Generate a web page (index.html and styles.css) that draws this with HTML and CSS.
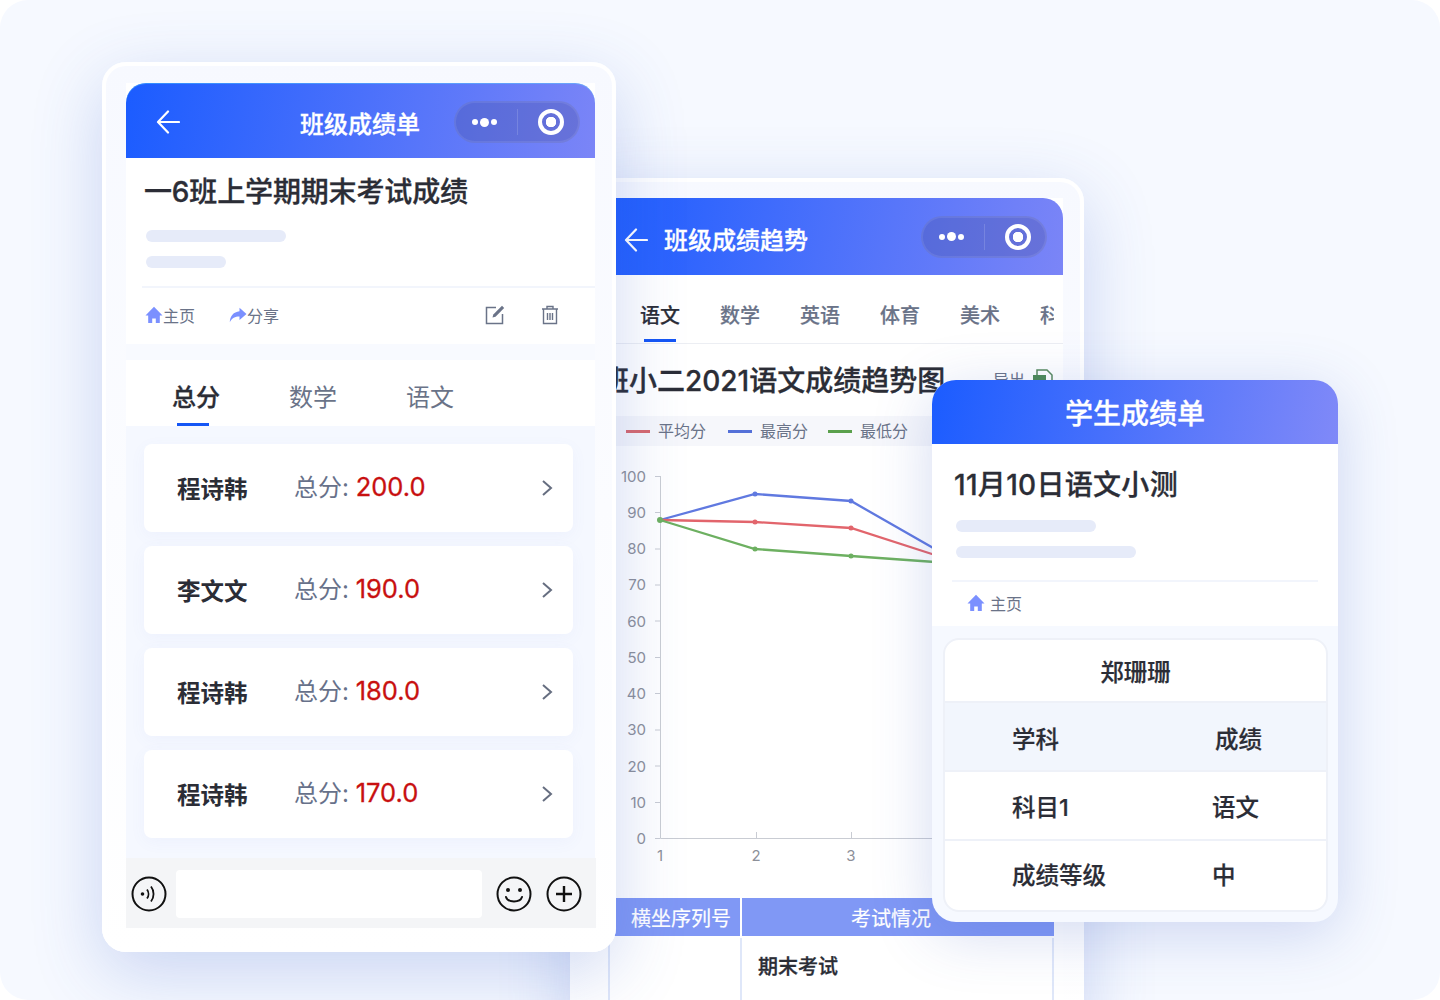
FILE: index.html
```html
<!DOCTYPE html>
<html lang="zh-CN">
<head>
  <meta charset="UTF-8">
  <title>成绩单</title>
  <link rel="stylesheet" href="styles.css">
</head>
<body>
<div class="canvas">

  <!-- 班级成绩趋势 -->
  <section class="frame frame-trend">
    <div class="screen">
      <header class="bar bar-trend">
        <svg class="back" width="24" height="24" viewBox="0 0 24 24"><path d="M12 1.500 2 12l10 10.500M3 12h20" fill="none" stroke="#fff" stroke-width="2.200" stroke-linecap="round" stroke-linejoin="round"/></svg>
        <h2 class="bar-title">班级成绩趋势</h2>
        <div class="capsule">
          <span class="dots"><i></i><b></b><i></i></span>
          <span class="capsule-line"></span>
          <span class="ring"></span>
        </div>
      </header>
      <nav class="subject-tabs">
        <a class="active">语文</a><a>数学</a><a>英语</a><a>体育</a><a>美术</a><a>科学</a>
      </nav>
      <div class="trend-head">
        <h3>班小二2021语文成绩趋势图</h3>
        <span class="export">导出
          <svg width="20" height="22" viewBox="0 0 20 22"><path d="M4 8V2h10l5 5v14H6" fill="none" stroke="#5a8a5e" stroke-width="1.500"/><rect x="0" y="7" width="13" height="9" fill="#4e8a55"/></svg>
        </span>
      </div>
      <div class="legend">
        <span class="key key-red">平均分</span>
        <span class="key key-blue">最高分</span>
        <span class="key key-green">最低分</span>
      </div>
      <svg class="chart" width="473" height="452" viewBox="590 446 473 452">
        <g class="axis">
          <path d="M660.500 476v362.500H1063"/>
          <path d="M655 476.500h5M655 512.500h5M655 549h5M655 585h5M655 621h5M655 657.500h5M655 693.500h5M655 730h5M655 766h5M655 802.500h5M655 838.500h5M756.500 832v6M851.500 832v6"/>
        </g>
        <g class="ticks">
          <text x="646" y="482">100</text><text x="646" y="518">90</text><text x="646" y="554">80</text>
          <text x="646" y="590">70</text><text x="646" y="627">60</text><text x="646" y="663">50</text>
          <text x="646" y="699">40</text><text x="646" y="735">30</text><text x="646" y="772">20</text>
          <text x="646" y="808">10</text><text x="646" y="844">0</text>
        </g>
        <g class="ticks ticks-x">
          <text x="660" y="861">1</text><text x="756" y="861">2</text><text x="851" y="861">3</text>
        </g>
        <polyline class="line" stroke="#6079e0" points="660,520 755,494 851,501 935,549"/>
        <polyline class="line" stroke="#e2656c" points="660,520 755,522 851,528 935,555"/>
        <polyline class="line" stroke="#6db061" points="660,520 755,549 851,556 935,562"/>
        <g fill="#6079e0"><circle cx="755" cy="494" r="2.500"/><circle cx="851" cy="501" r="2.500"/></g>
        <g fill="#e2656c"><circle cx="755" cy="522" r="2.500"/><circle cx="851" cy="528" r="2.500"/></g>
        <g fill="#6db061"><circle cx="660" cy="520" r="3"/><circle cx="755" cy="549" r="2.500"/><circle cx="851" cy="556" r="2.500"/></g>
      </svg>
      <div class="sheet">
        <div class="sheet-th sheet-th-a">横坐序列号</div>
        <div class="sheet-th sheet-th-b">考试情况</div>
        <div class="sheet-td"></div>
        <div class="sheet-td sheet-exam">期末考试</div>
      </div>
    </div>
  </section>

  <!-- 班级成绩单 -->
  <section class="frame frame-class">
    <div class="screen">
      <header class="bar bar-class">
        <svg class="back" width="24" height="24" viewBox="0 0 24 24"><path d="M12 1.500 2 12l10 10.500M3 12h20" fill="none" stroke="#fff" stroke-width="2.200" stroke-linecap="round" stroke-linejoin="round"/></svg>
        <h2 class="bar-title">班级成绩单</h2>
        <div class="capsule">
          <span class="dots"><i></i><b></b><i></i></span>
          <span class="capsule-line"></span>
          <span class="ring"></span>
        </div>
      </header>
      <div class="intro">
        <h1>一6班上学期期末考试成绩</h1>
        <div class="pill pill-140"></div>
        <div class="pill pill-80"></div>
      </div>
      <div class="rule"></div>
      <div class="actions">
        <a class="action">
          <svg width="18" height="18" viewBox="0 0 18 18"><path d="M9 .8.500 9.500h2.700V17h4v-4.500h3.600V17h4V9.500h2.700z" fill="#7b90ff"/></svg>主页</a>
        <a class="action">
          <svg width="18" height="16" viewBox="0 0 18 16"><path d="M10.500 .8 17.500 7l-7 6V9.500C6 9.500 3 11 .8 15.200 1 9 4.500 5 10.500 4.300z" fill="#7b90ff"/></svg>分享</a>
        <svg class="tool-edit" width="20" height="20" viewBox="0 0 20 20"><path d="M11 2.500H1.500v16h16V9" fill="none" stroke="#6a7388" stroke-width="1.500"/><path d="M17 .8 19.200 3l-8.700 8.700-3 .8.800-3z" fill="#6a7388"/></svg>
        <svg class="tool-trash" width="18" height="20" viewBox="0 0 18 20"><path d="M1 4h16M6 4V1.500h6V4M2.500 4v14.500h13V4M6.500 8v7M9 8v7M11.500 8v7" fill="none" stroke="#6a7388" stroke-width="1.400"/></svg>
      </div>
      <div class="band"></div>
      <nav class="total-tabs">
        <a class="active">总分</a><a>数学</a><a>语文</a>
      </nav>
      <div class="list">
        <div class="row"><span class="row-name">程诗韩</span><span class="row-score">总分: <em>200.0</em></span><svg class="chevron" width="12" height="18" viewBox="0 0 12 18"><path d="m2 2 8 7-8 7" fill="none" stroke="#666e80" stroke-width="2"/></svg></div>
        <div class="row"><span class="row-name">李文文</span><span class="row-score">总分: <em>190.0</em></span><svg class="chevron" width="12" height="18" viewBox="0 0 12 18"><path d="m2 2 8 7-8 7" fill="none" stroke="#666e80" stroke-width="2"/></svg></div>
        <div class="row"><span class="row-name">程诗韩</span><span class="row-score">总分: <em>180.0</em></span><svg class="chevron" width="12" height="18" viewBox="0 0 12 18"><path d="m2 2 8 7-8 7" fill="none" stroke="#666e80" stroke-width="2"/></svg></div>
        <div class="row"><span class="row-name">程诗韩</span><span class="row-score">总分: <em>170.0</em></span><svg class="chevron" width="12" height="18" viewBox="0 0 12 18"><path d="m2 2 8 7-8 7" fill="none" stroke="#666e80" stroke-width="2"/></svg></div>
      </div>
      <div class="composer">
        <svg width="36" height="36" viewBox="0 0 36 36"><circle cx="18" cy="18" r="16.500" fill="none" stroke="#111" stroke-width="2"/><circle cx="11.500" cy="18" r="1.800" fill="#111"/><path d="M16 13.500c2 2.600 2 6.400 0 9M20 10.500c3.400 4.400 3.400 10.600 0 15" fill="none" stroke="#111" stroke-width="1.800"/></svg>
        <div class="composer-input"></div>
        <svg width="36" height="36" viewBox="0 0 36 36"><circle cx="18" cy="18" r="16.500" fill="none" stroke="#111" stroke-width="2"/><circle cx="12" cy="14" r="2" fill="#111"/><circle cx="24" cy="14" r="2" fill="#111"/><path d="M10 21c2 6 14 6 16 0" fill="none" stroke="#111" stroke-width="2" stroke-linecap="round"/></svg>
        <svg width="36" height="36" viewBox="0 0 36 36"><circle cx="18" cy="18" r="16.500" fill="none" stroke="#111" stroke-width="2"/><path d="M18 10v16M10 18h16" fill="none" stroke="#111" stroke-width="2.400"/></svg>
      </div>
    </div>
  </section>

  <!-- 学生成绩单 -->
  <section class="student">
    <header class="student-bar">学生成绩单</header>
    <div class="student-intro">
      <h1>11月10日语文小测</h1>
      <div class="pill pill-140"></div>
      <div class="pill pill-180"></div>
      <div class="student-rule"></div>
      <a class="action action-home">
        <svg width="18" height="18" viewBox="0 0 18 18"><path d="M9 .8.500 9.500h2.700V17h4v-4.500h3.600V17h4V9.500h2.700z" fill="#7b90ff"/></svg>主页</a>
    </div>
    <div class="grade">
      <div class="grade-name">郑珊珊</div>
      <div class="grade-row grade-head"><span>学科</span><span class="grade-shift">成绩</span></div>
      <div class="grade-row"><span>科目1</span><span>语文</span></div>
      <div class="grade-row"><span>成绩等级</span><span>中</span></div>
    </div>
  </section>

</div>
</body>
</html>
```

FILE: styles.css
```css
* {
  box-sizing: border-box;
  margin: 0;
  padding: 0;
}
body {
  width: 1440px;
  height: 1000px;
  overflow: hidden;
  background-color: white;
  font-family: Inter, 'Noto Sans CJK SC', sans-serif;
  color: #2b2d36;
}
.canvas {
  position: relative;
  width: 1440px;
  height: 1000px;
  overflow: hidden;
  border-radius: 28px;
  background-color: #f6f9ff;
}

/* windows */
.frame {
  position: absolute;
  width: 514px;
  border-radius: 24px;
  background: linear-gradient(180deg, #f7f9ff, #ffffff);
  box-shadow: inset 0 0 0 4px rgba(255, 255, 255, 0.9), 0 20px 70px rgba(60, 95, 200, 0.24);
}
.frame-class {
  left: 102px;
  top: 62px;
  height: 890px;
  padding: 21px 21px 0 24px;
}
.frame-trend {
  left: 570px;
  top: 178px;
  height: 860px;
  padding: 20px 21px 0 20px;
}
.screen {
  background-color: white;
}
.bar {
  color: white;
  background: linear-gradient(100deg, #1b5cff, #7b85f7);
  border-radius: 20px 20px 0 0;
}
.bar-class {
  display: grid;
  grid-template-columns: 144px auto 1fr;
  align-items: center;
  height: 75px;
  padding: 0 15px 0 30px;
  box-shadow: inset 0 1px rgba(90, 230, 255, 0.35);
}
.bar-trend {
  display: flex;
  align-items: center;
  height: 77px;
  padding: 0 16px 0 34px;
}
.bar-class .back {
  margin-top: 2px;
}
.bar-trend .back {
  margin-top: 7px;
}
.bar-title {
  margin-top: 8px;
  font-size: 24px;
  font-weight: 500;
  line-height: 32px;
  -webkit-text-stroke: 0.3px;
}
.bar-trend .bar-title {
  margin-left: 16px;
}
.capsule {
  display: flex;
  align-items: center;
  justify-self: end;
  width: 126px;
  height: 42px;
  margin-left: auto;
  padding: 0 14px 0 16px;
  border: 2px solid rgba(255, 255, 255, 0.08);
  border-radius: 21px;
  background-color: rgba(70, 75, 150, 0.3);
}
.bar-class .capsule {
  margin-top: 3px;
}
.dots {
  display: flex;
  align-items: center;
  gap: 2px;
}
.dots i, .dots b {
  display: block;
  width: 6px;
  height: 6px;
  border-radius: 50%;
  background-color: white;
}
.dots b {
  width: 9px;
  height: 9px;
}
.capsule-line {
  width: 1px;
  height: 26px;
  margin-left: 20px;
  background-color: rgba(255, 255, 255, 0.15);
}
.ring {
  width: 26px;
  height: 26px;
  margin-left: auto;
  border: 4px solid white;
  border-radius: 50%;
  background: radial-gradient(circle, white 0 5px, transparent 5.500px);
}

/* left window */
.intro {
  padding: 14px 0 0 18px;
}
.intro h1, .student-intro h1 {
  font-size: 28px;
  font-weight: 500;
  line-height: 40px;
  -webkit-text-stroke: 0.3px;
}
.intro h1 {
  letter-spacing: -0.15px;
}
.pill {
  height: 12px;
  border-radius: 6px;
  background-color: #e6ebf9;
}
.pill-140 {
  width: 140px;
}
.pill-80 {
  width: 80px;
}
.pill-180 {
  width: 180px;
}
.intro .pill-140 {
  margin: 18px 0 14px 2px;
}
.intro .pill-80 {
  margin-left: 2px;
}
.rule {
  width: 453px;
  height: 2px;
  margin: 18px 0 0 16px;
  background-color: #f2f5fc;
}
.actions {
  display: flex;
  align-items: center;
  height: 56px;
  padding: 0 0 2px 19px;
}
.action {
  display: flex;
  align-items: center;
  width: 84px;
  font-size: 16px;
  color: #6a7388;
}
.tool-edit {
  margin-left: 172px;
}
.tool-trash {
  margin-left: 36px;
}
.band {
  height: 16px;
  background-color: #f8faff;
}
.total-tabs {
  display: flex;
  gap: 69px;
  height: 66px;
  padding: 22px 0 0 46px;
  font-size: 24px;
  line-height: 32px;
  color: #6a7388;
}
.total-tabs a {
  position: relative;
}
.total-tabs a.active {
  color: #2b2d36;
  font-weight: 500;
  -webkit-text-stroke: 0.3px;
}
.total-tabs a.active::after {
  content: "";
  position: absolute;
  left: 5px;
  top: 41px;
  width: 32px;
  height: 3px;
  background-color: #1556f5;
}
.list {
  display: flex;
  flex-direction: column;
  gap: 14px;
  height: 432px;
  padding: 18px 22px 0 18px;
  background-color: #f5f8ff;
}
.row {
  display: flex;
  align-items: center;
  height: 88px;
  padding-left: 33px;
  border-radius: 8px;
  background-color: white;
  box-shadow: 0 4px 16px rgba(90, 120, 220, 0.05);
}
.row-name {
  width: 117px;
  font-size: 23.500px;
  font-weight: 700;
}
.row-score {
  margin-bottom: 5px;
  font-size: 24px;
  color: #67718a;
}
.row-score em {
  font-style: normal;
  font-size: 25.500px;
  color: #c81010;
  -webkit-text-stroke: 0.3px;
}
.chevron {
  margin-left: auto;
  margin-right: 20px;
}
.composer {
  display: flex;
  align-items: center;
  width: 470px;
  height: 70px;
  padding: 2px 14px 0 5px;
  background-color: #f4f5f7;
}
.composer svg:last-child {
  margin-left: 14px;
}
.composer-input {
  width: 306px;
  height: 48px;
  margin: 0 14px 0 9px;
  border-radius: 4px;
  background-color: white;
}

/* middle window */
.subject-tabs {
  display: flex;
  gap: 40px;
  height: 68px;
  margin-right: 9px;
  padding: 27px 0 0 50px;
  overflow: hidden;
  font-size: 20px;
  line-height: 28px;
  color: #6a7388;
  white-space: nowrap;
}
.subject-tabs a {
  position: relative;
  font-weight: 500;
  -webkit-text-stroke: 0.2px;
}
.subject-tabs a.active {
  color: #2b2d36;
}
.subject-tabs a.active::after {
  content: "";
  position: absolute;
  left: 4px;
  top: 37px;
  width: 32px;
  height: 3px;
  background-color: #1556f5;
}
.trend-head {
  display: flex;
  align-items: center;
  height: 73px;
  padding: 0 10px 2px 11px;
  border-top: 1px solid #eceef3;
}
.trend-head h3 {
  font-size: 28px;
  font-weight: 500;
  -webkit-text-stroke: 0.3px;
}
.export {
  display: flex;
  align-items: center;
  gap: 8px;
  margin-left: auto;
  font-size: 16px;
  color: #6a7388;
}
.legend {
  display: flex;
  height: 30px;
  padding-left: 36px;
  background-color: #f6f7fb;
}
.key {
  display: flex;
  align-items: center;
  width: 102px;
  padding-bottom: 3px;
  font-size: 16px;
  color: #6a7388;
}
.key::before {
  content: "";
  width: 24px;
  height: 3px;
  margin: 3px 8px 0 0;
}
.key-red::before {
  background-color: #d8696e;
}
.key-blue::before {
  background-color: #5470d8;
}
.key-green::before {
  background-color: #5aa04c;
}
.key-blue {
  width: 100px;
}
.chart {
  display: block;
}
.axis path {
  fill: none;
  stroke: #c9ccd3;
}
.ticks text {
  font-size: 15px;
  fill: #8d9099;
  text-anchor: end;
}
.ticks-x text {
  text-anchor: middle;
}
.line {
  fill: none;
  stroke-width: 2.300;
}
.sheet {
  display: grid;
  grid-template-columns: 132px 312px;
  column-gap: 2px;
  width: 446px;
  margin-left: 18px;
  height: 120px;
}
.sheet-th {
  height: 38px;
  padding-top: 2px;
  font-size: 20px;
  line-height: 38px;
  color: white;
  text-align: center;
  background-color: #8098f5;
  -webkit-text-stroke: 0.2px;
}
.sheet-th-a {
  padding-left: 14px;
}
.sheet-th-b {
  padding-right: 14px;
}
.sheet-td {
  height: 82px;
  margin-top: 2px;
  border-left: 2px solid #dfe7f9;
}
.sheet-exam {
  margin-left: -2px;
  padding: 16px 0 0 16px;
  border-right: 2px solid #dfe7f9;
  font-size: 20px;
  font-weight: 500;
  line-height: 26px;
  -webkit-text-stroke: 0.3px;
}

/* right window */
.student {
  position: absolute;
  left: 932px;
  top: 380px;
  width: 406px;
  height: 542px;
  border-radius: 24px;
  background-color: #f6f9ff;
  box-shadow: 0 12px 60px rgba(60, 90, 190, 0.22);
}
.student-bar {
  height: 64px;
  border-radius: 24px 24px 0 0;
  background: linear-gradient(100deg, #1b5cff, #8089f8);
  color: white;
  font-size: 28px;
  font-weight: 500;
  line-height: 68px;
  text-align: center;
  -webkit-text-stroke: 0.3px;
}
.student-intro {
  height: 182px;
  padding: 21px 20px 0 22px;
  background-color: white;
}
.student-intro h1 {
  letter-spacing: 0.3px;
}
.student-intro .pill {
  margin: 0 0 14px 2px;
}
.student-intro .pill-140 {
  margin-top: 15px;
}
.student-rule {
  height: 2px;
  margin: 22px 0 0 -2px;
  background-color: #f2f5fc;
}
.action-home {
  gap: 5px;
  width: auto;
  height: 42px;
  padding-left: 13px;
  font-size: 16px;
}
.grade {
  height: 274px;
  margin: 12px 10px 0 11px;
  overflow: hidden;
  border: 2px solid #eef1f8;
  border-radius: 16px;
  background-color: white;
  font-size: 23.500px;
  font-weight: 500;
  -webkit-text-stroke: 0.2px;
}
.grade-name {
  height: 63px;
  line-height: 65px;
  text-align: center;
  border-bottom: 2px solid #eef1f8;
}
.grade-row {
  display: grid;
  grid-template-columns: 200px 1fr;
  align-items: center;
  height: 69px;
  padding-left: 67px;
  border-bottom: 2px solid #eef1f8;
}
.grade-row:last-child {
  padding-bottom: 4px;
  border-bottom: none;
}
.grade-head {
  padding-top: 3px;
  background-color: #f2f6fd;
}
.grade-shift {
  margin-left: 3px;
}
```
